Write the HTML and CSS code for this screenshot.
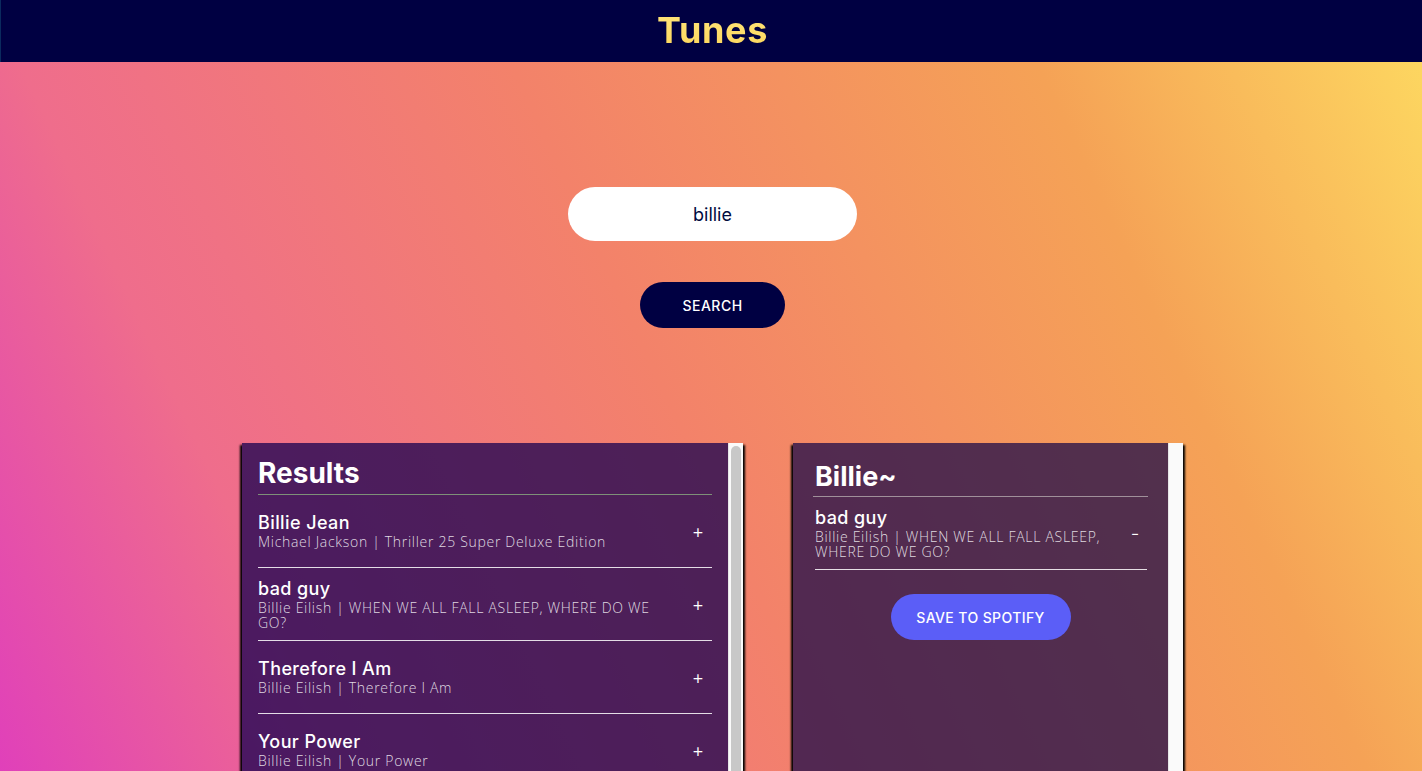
FILE: index.html
```html
<!DOCTYPE html>
<html lang="en">
<head>
<meta charset="utf-8">
<title>Tunes</title>
<link rel="stylesheet" href="styles.css">
</head>
<body>
<header class="topbar">
  <h1 class="brand">Tunes</h1>
</header>
<main class="app">
  <section class="search-bar">
    <input class="search-input" type="text" value="billie">
    <button class="search-btn">SEARCH</button>
  </section>
  <section class="lists">
    <div class="panel results">
      <div class="panel-body">
        <h2 class="panel-title">Results</h2>
        <div class="track">
          <div class="track-info">
            <h3 class="track-name">Billie Jean</h3>
            <p class="track-meta">Michael Jackson | Thriller 25 Super Deluxe Edition</p>
          </div>
          <button class="track-action">+</button>
        </div>
        <div class="track">
          <div class="track-info">
            <h3 class="track-name">bad guy</h3>
            <p class="track-meta">Billie Eilish | WHEN WE ALL FALL ASLEEP, WHERE DO WE GO?</p>
          </div>
          <button class="track-action">+</button>
        </div>
        <div class="track">
          <div class="track-info">
            <h3 class="track-name">Therefore I Am</h3>
            <p class="track-meta">Billie Eilish | Therefore I Am</p>
          </div>
          <button class="track-action">+</button>
        </div>
        <div class="track">
          <div class="track-info">
            <h3 class="track-name">Your Power</h3>
            <p class="track-meta">Billie Eilish | Your Power</p>
          </div>
          <button class="track-action">+</button>
        </div>
      </div>
      <div class="scroll-track">
        <div class="scroll-thumb"></div>
      </div>
    </div>
    <div class="panel playlist">
      <div class="panel-body playlist-body">
        <input class="playlist-name" type="text" value="Billie~">
        <div class="playlist-tracks">
          <div class="track">
            <div class="track-info">
              <h3 class="track-name">bad guy</h3>
              <p class="track-meta">Billie Eilish | WHEN WE ALL FALL ASLEEP, WHERE DO WE GO?</p>
            </div>
            <button class="track-action">-</button>
          </div>
        </div>
        <button class="save-btn">SAVE TO SPOTIFY</button>
      </div>
      <div class="scroll-track"></div>
    </div>
  </section>
</main>
</body>
</html>
```
FILE: styles.css
```css
html, body {
  margin: 0;
  padding: 0;
  height: 100%;
  overflow: hidden;
}

body {
  font-family: "Open Sans", "Liberation Sans", sans-serif;
  background: #000042;
}

.topbar {
  box-sizing: border-box;
  height: 62px;
  padding-left: 2px;
  background: #000042;
  border-left: 1px solid #0b2a5e;
  display: flex;
  align-items: center;
  justify-content: center;
}

.brand {
  margin: 0;
  font-family: Inter, "Open Sans", sans-serif;
  font-weight: 700;
  font-size: 36px;
  letter-spacing: 0.6px;
  line-height: 1;
  color: #fddc65;
  background: linear-gradient(180deg, #ffe57a 0%, #fcd65c 100%);
  -webkit-background-clip: text;
  background-clip: text;
  -webkit-text-fill-color: transparent;
  padding-bottom: 2px;
}

.app {
  box-sizing: border-box;
  height: calc(100vh - 62px);
  padding-left: 3px;
  background: linear-gradient(65deg, #e040ba 0%, #ef6d8c 20%, #f3826a 48%, #f5a256 78%, #fdd660 100%);
  display: flex;
  flex-direction: column;
  align-items: center;
  overflow: hidden;
}

.search-bar {
  display: flex;
  flex-direction: column;
  align-items: center;
  padding-top: 125px;
}

.search-input {
  box-sizing: border-box;
  width: 289px;
  height: 54px;
  border: 0;
  border-radius: 27px;
  background: #fff;
  text-align: center;
  font-family: Inter, "Liberation Sans", sans-serif;
  font-size: 18px;
  color: #010c3f;
  outline: none;
}

.search-btn {
  margin-top: 41px;
  width: 145px;
  height: 46px;
  border: 0;
  border-radius: 23px;
  background: #000042;
  color: #fff;
  font-family: Inter, "Liberation Sans", sans-serif;
  font-size: 14px;
  font-weight: 500;
  letter-spacing: 0.5px;
}

.lists {
  margin-top: 115px;
  display: flex;
  gap: 50px;
  align-items: flex-start;
}

.panel {
  box-sizing: border-box;
  height: 950px;
  overflow: hidden;
  display: flex;
  box-shadow: 0 4px 2px 2px #000;
  color: #fff;
}

.panel-body {
  flex: 1;
  min-width: 0;
}

.scroll-track {
  box-sizing: border-box;
  width: 15px;
  flex: none;
  background: #fafafa;
  border-left: 1px solid #e6e6e6;
  padding: 3px 2px 0 2px;
}

.scroll-thumb {
  height: 560px;
  border-radius: 5px;
  background: #c8c8c8;
}

.results {
  width: 501px;
  background: rgba(22, 0, 80, 0.75);
}

.results .panel-body {
  padding: 0 16px;
}

.playlist {
  width: 390px;
  background: rgba(20, 6, 72, 0.72);
}

.playlist-body {
  padding: 0 20px;
  display: flex;
  flex-direction: column;
  align-items: stretch;
}

.panel-title {
  margin: 14px 0 0;
  padding-bottom: 4px;
  font-family: Inter, "Open Sans", sans-serif;
  font-weight: 700;
  font-size: 28px;
  line-height: 33px;
  border-bottom: 1px solid #7e9078;
}

.playlist-name {
  box-sizing: border-box;
  width: 100%;
  margin-top: 13px;
  padding: 0 2px;
  height: 41px;
  background: transparent;
  border: 0;
  border-bottom: 1px solid #a0909a;
  color: #fff;
  font-family: Inter, "Open Sans", sans-serif;
  font-weight: 700;
  font-size: 27px;
  outline: none;
}

.playlist-tracks {
  padding: 0 1px 0 2px;
}

.track {
  height: 72px;
  display: flex;
  align-items: center;
  border-bottom: 1px solid rgba(255, 255, 255, 0.85);
}

.track-info {
  flex: 1;
  min-width: 0;
}

.track-name {
  margin: 0 0 2px;
  font-family: Inter, "Open Sans", sans-serif;
  font-size: 18px;
  font-weight: 500;
  line-height: 21px;
  letter-spacing: 0.4px;
}

.track-meta {
  margin: 0;
  font-size: 14px;
  font-weight: 300;
  line-height: 14.5px;
  letter-spacing: 0.7px;
  color: rgba(255, 255, 255, 0.84);
}

.track-action {
  flex: none;
  box-sizing: border-box;
  width: 40px;
  background: transparent;
  border: 0;
  color: #fff;
  font-family: Inter, "Open Sans", sans-serif;
  font-size: 19px;
  font-weight: 300;
  padding: 0 0 0 12px;
  text-align: center;
}

.playlist .track-action {
  width: 26px;
  padding: 0 0 0 2px;
}

.save-btn {
  align-self: center;
  margin-top: 24px;
  width: 180px;
  height: 46px;
  border: 0;
  border-radius: 23px;
  background: #5b5ef7;
  color: #fff;
  font-family: Inter, "Liberation Sans", sans-serif;
  font-size: 14px;
  font-weight: 500;
  letter-spacing: 0.4px;
}
```
